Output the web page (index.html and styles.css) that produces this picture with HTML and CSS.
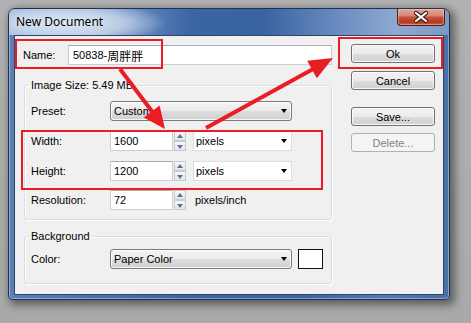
FILE: index.html
```html
<!DOCTYPE html>
<html>
<head>
<meta charset="utf-8">
<link rel="stylesheet" href="styles.css">
</head>
<body>
<div class="window">
  <div class="titlebar">
    <span class="title">New Document</span>
    <div class="close">
      <svg width="46" height="16" viewBox="0 0 46 16">
        <path d="M18 4 L28 12 M28 4 L18 12" stroke="#3a1a14" stroke-width="4.2" stroke-linecap="round"/>
        <path d="M18 4 L28 12 M28 4 L18 12" stroke="#ffffff" stroke-width="2.2" stroke-linecap="round"/>
      </svg>
    </div>
  </div>
  <div class="client">
    <div class="main">
      <div class="name-row">
        <label>Name:</label>
        <div class="textbox name-box">50838-<span class="cjk">周胖胖</span></div>
      </div>
      <fieldset class="group size-group">
        <legend>Image Size: 5.49 MB</legend>
        <div class="row">
          <label>Preset:</label>
          <div class="combo">Custom<i class="caret"></i></div>
        </div>
        <div class="row">
          <label>Width:</label>
          <div class="textbox num">1600</div>
          <div class="spin"><span class="up"></span><span class="down"></span></div>
          <div class="select unit">pixels<i class="caret"></i></div>
        </div>
        <div class="row">
          <label>Height:</label>
          <div class="textbox num">1200</div>
          <div class="spin"><span class="up"></span><span class="down"></span></div>
          <div class="select unit">pixels<i class="caret"></i></div>
        </div>
        <div class="row res-row">
          <label>Resolution:</label>
          <div class="textbox num">72</div>
          <div class="spin"><span class="up"></span><span class="down"></span></div>
          <span class="unit-text">pixels/inch</span>
        </div>
      </fieldset>
      <fieldset class="group bg-group">
        <legend>Background</legend>
        <div class="row">
          <label>Color:</label>
          <div class="combo">Paper Color<i class="caret"></i></div>
          <div class="swatch"></div>
        </div>
      </fieldset>
    </div>
    <div class="actions">
      <button class="btn">Ok</button>
      <button class="btn cancel">Cancel</button>
      <button class="btn save">Save...</button>
      <button class="btn delete" disabled>Delete...</button>
    </div>
  </div>
</div>

<div class="mark mark-name"></div>
<div class="mark mark-ok"></div>
<div class="mark mark-size"></div>
<svg class="arrows" width="471" height="323" viewBox="0 0 471 323">
  <line x1="120" y1="69" x2="154" y2="114" stroke="#ea1d25" stroke-width="4"/>
  <polygon points="165,129 143.7,117.6 159.6,105.5" fill="#ea1d25"/>
  <line x1="206" y1="128" x2="314" y2="68.5" stroke="#ea1d25" stroke-width="4"/>
  <polygon points="333,58 316.8,78.3 307.2,60.7" fill="#ea1d25"/>
</svg>
</body>
</html>
```
FILE: styles.css
```css
* { box-sizing: border-box; }
html, body { margin: 0; padding: 0; }
body {
  width: 471px;
  height: 323px;
  overflow: hidden;
  position: relative;
  background: linear-gradient(180deg, #b2b2b2 0%, #a9a9a9 100%);
  font-family: "Liberation Sans", Arial, sans-serif;
  font-size: 11px;
  color: #000;
}

.window {
  margin: 8px;
  width: 442px;
  height: 292px;
  border: 1px solid #1f3350;
  border-radius: 7px 7px 4px 4px;
  background: linear-gradient(90deg, #5b80b8 0%, #4a72ae 20%, #3b64a2 45%, #3b64a2 65%, #5279b2 85%, #4a70aa 100%);
  box-shadow: 3px 3px 9px 2px rgba(0, 0, 0, 0.45), inset 0 0 0 1px rgba(255, 255, 255, 0.35);
  display: flex;
  flex-direction: column;
}

.titlebar {
  height: 26px;
  flex: none;
  display: flex;
  justify-content: space-between;
  align-items: flex-start;
  padding-left: 7px;
  border-radius: 6px 6px 0 0;
  background:
    radial-gradient(ellipse 100px 22px at 58px 14px, rgba(218, 229, 242, 0.97) 0%, rgba(204, 219, 238, 0.8) 55%, rgba(204, 219, 238, 0) 100%),
    linear-gradient(90deg, #9ab3d6 0%, #8ea9d0 18%, #5f84bb 30%, #3a64a2 42%, #3a63a1 58%, #6a8dc1 75%, #8fa9d0 88%, #7a98c6 100%);
}

.title {
  font-family: "Noto Sans", sans-serif;
  font-size: 12px;
  line-height: 26px;
  color: #000;
  text-shadow: 0 0 6px rgba(255, 255, 255, 0.9);
}

.close {
  width: 48px;
  height: 17px;
  margin-right: 4px;
  border: 1px solid #4a1d16;
  border-top: none;
  border-radius: 0 0 4px 4px;
  background: linear-gradient(180deg, #e4a597 0%, #d98a79 40%, #c5523d 52%, #b63a22 80%, #c85a3c 100%);
  box-shadow: inset 0 0 0 1px rgba(255, 210, 200, 0.45);
  display: flex;
  align-items: center;
  justify-content: center;
}
.close svg { display: block; }

.client {
  margin: 0 5px;
  height: 260px;
  flex: none;
  border: 1px solid #2f4566;
  background: #f0f0f0;
  display: flex;
  padding: 8px 8px 0 8px;
}

.main { width: 309px; }

.name-row {
  display: flex;
  align-items: center;
  margin-top: 1px;
  height: 20px;
}
.name-row label { width: 45px; flex: none; }

.textbox {
  height: 20px;
  background: #fff;
  border: 1px solid #c9ced6;
  border-top-color: #abadb3;
  padding: 0 3px;
  display: flex;
  align-items: center;
  white-space: nowrap;
}
.name-box { width: 264px; padding-left: 4px; }
.cjk {
  font-family: "Noto Sans CJK SC", sans-serif;
  font-size: 12px;
}

.group {
  margin: 14px 0 0 1px;
  width: 308px;
  border: 1px solid #d5dfe5;
  border-radius: 3px;
  padding: 9px 6px 9px 6px;
  box-shadow: inset 1px 1px 0 #fff, 1px 1px 0 #fff;
  min-width: 0;
}
.group legend {
  padding: 0 2px;
  margin-left: -2px;
  line-height: 13px;
}
.bg-group {
  margin-top: 10px;
  padding-top: 6px;
  padding-bottom: 14px;
}

.row {
  display: flex;
  align-items: center;
  height: 20px;
}
.row + .row { margin-top: 10px; }
.row + .res-row { margin-top: 9px; }
.row label { width: 79px; flex: none; }

.combo {
  position: relative;
  width: 182px;
  height: 20px;
  border: 1px solid #7a7a7a;
  border-radius: 3px;
  background: linear-gradient(180deg, #f3f3f3 0%, #ebebeb 50%, #dddddd 51%, #d0d0d0 100%);
  box-shadow: inset 0 0 0 1px rgba(255, 255, 255, 0.8);
  padding-left: 3px;
  display: flex;
  align-items: center;
}

.caret {
  position: absolute;
  right: 4px;
  top: 7px;
  width: 0;
  height: 0;
  border-left: 3.5px solid transparent;
  border-right: 3.5px solid transparent;
  border-top: 4px solid #000;
}

.num { width: 63px; }

.spin {
  width: 12px;
  height: 20px;
  margin-left: 1px;
  display: flex;
  flex-direction: column;
  justify-content: space-between;
}
.spin span {
  height: 10px;
  border: 1px solid #c6cad2;
  background: linear-gradient(180deg, #f7f7f7, #e4e6ea);
  position: relative;
}
.spin span::after {
  content: "";
  position: absolute;
  left: 2px;
  width: 0;
  height: 0;
  border-left: 3px solid transparent;
  border-right: 3px solid transparent;
}
.spin .up::after { top: 2px; border-bottom: 4px solid #5d6f98; }
.spin .down::after { top: 3px; border-top: 4px solid #5d6f98; }

.select {
  position: relative;
  height: 20px;
  background: #fff;
  border: 1px solid #dadde3;
  padding-left: 2px;
  display: flex;
  align-items: center;
}
.unit { width: 99px; margin-left: 7px; }

.unit-text { margin-left: 9px; }

.swatch {
  width: 25px;
  height: 20px;
  margin-left: 6px;
  border: 1px solid #111;
  background: #fff;
}

.actions {
  margin-left: auto;
  width: 84px;
  display: flex;
  flex-direction: column;
}
.btn {
  height: 19px;
  padding: 0;
  font: inherit;
  color: #000;
  border: 1px solid #707070;
  border-radius: 3px;
  background: linear-gradient(180deg, #f2f2f2 0%, #ebebeb 50%, #dddddd 51%, #cfcfcf 100%);
  box-shadow: inset 0 0 0 1px rgba(252, 252, 252, 0.9);
}
.cancel { margin-top: 8px; }
.save { margin-top: 17px; }
.delete {
  margin-top: 7px;
  color: #838383;
  border-color: #adb2b5;
  background: #f4f4f4;
  box-shadow: none;
}

.mark {
  position: absolute;
  border: 2px solid #ea1d25;
}
.mark-name { left: 15px; top: 39px; width: 148px; height: 30px; }
.mark-ok { left: 338px; top: 37px; width: 105px; height: 32px; }
.mark-size { left: 21px; top: 130px; width: 302px; height: 60px; }

.arrows {
  position: absolute;
  left: 0;
  top: 0;
  pointer-events: none;
}
```
